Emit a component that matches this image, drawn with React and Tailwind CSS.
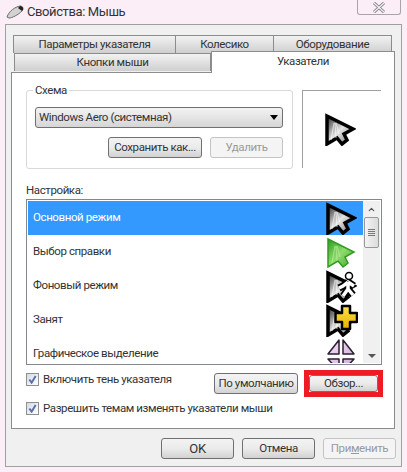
import { ChevronUp } from "lucide-react";

const font = { fontFamily: 'Roboto, "Noto Sans", sans-serif' };

const ARROW = "M2 3 L28 16 L19 21 L22 27 L17 31 L12 25 L2 31 Z";

function Cursor({ green = false }) {
  const id = green ? "arrowGreen" : "arrowGrey";
  return (
    <svg width="31" height="33" viewBox="0 0 31 33" className="shrink-0">
      <defs>
        <linearGradient id={id} x1="0" y1="0" x2="1" y2="1">
          {green ? (
            <>
              <stop offset="0" stopColor="#2c9a1e" />
              <stop offset="0.5" stopColor="#8fdc6c" />
              <stop offset="1" stopColor="#3ea62a" />
            </>
          ) : (
            <>
              <stop offset="0" stopColor="#2a2a2a" />
              <stop offset="0.5" stopColor="#e4e4e4" />
              <stop offset="1" stopColor="#707070" />
            </>
          )}
        </linearGradient>
      </defs>
      <path
        d={ARROW}
        fill={`url(#${id})`}
        stroke={green ? "#2f9c22" : "#000"}
        strokeWidth={green ? 1.5 : 3.5}
        strokeLinejoin="miter"
      />
      <path
        d="M6 27 L9 10 M11 25 L10 10 M14 21 L11 10"
        stroke={green ? "#c8f0b0" : "#fff"}
        strokeOpacity="0.55"
        strokeWidth="1.2"
        fill="none"
      />
    </svg>
  );
}

function Btn({ children, disabled, className = "" }) {
  return (
    <div
      className={`flex items-center justify-center whitespace-nowrap rounded-[3px] border text-[11.5px] ${
        disabled
          ? "border-[#c4c4c4] bg-[#f4f4f4] text-[#9a9a9a]"
          : "border-[#707070] bg-gradient-to-b from-[#f3f3f3] via-[#ebebeb] to-[#d2d2d2] text-[#333]"
      } ${className}`}
    >
      {children}
    </div>
  );
}

function Check({ children }) {
  return (
    <div className="flex items-center gap-[4px] whitespace-nowrap text-[11.5px] text-[#333]">
      <div className="flex h-[13px] w-[13px] items-center justify-center border border-[#8e8f8f] bg-gradient-to-br from-[#d5dbe3] to-white">
        <svg width="9" height="9" viewBox="0 0 10 10">
          <path d="M1.5 5 L4 8.5 L8.5 1" stroke="#5a70a8" strokeWidth="2.2" fill="none" />
        </svg>
      </div>
      {children}
    </div>
  );
}

const rows = ["Основной режим", "Выбор справки", "Фоновый режим", "Занят", "Графическое выделение"];

function RowIcon({ i }) {
  if (i === 0) return <Cursor />;
  if (i === 1) return <Cursor green />;
  if (i === 2)
    return (
      <div className="relative h-[33px] w-[31px]">
        <Cursor />
        <svg width="20" height="27" viewBox="0 0 20 27" className="absolute right-0 top-[1px]">
          <path d="M11 11 L6 15 L2 17 M11 11 L11 18 L6 25 M11 18 L16 24 M11 11 L17 15" stroke="#000" strokeWidth="7" fill="none" />
          <path d="M11 11 L6 15 L2 17 M11 11 L11 18 L6 25 M11 18 L16 24 M11 11 L17 15" stroke="#fff" strokeWidth="3.5" fill="none" />
          <circle cx="12" cy="5" r="3.5" fill="#fff" stroke="#000" strokeWidth="1.5" />
        </svg>
      </div>
    );
  if (i === 3)
    return (
      <div className="relative h-[33px] w-[31px]">
        <Cursor />
        <svg width="24" height="27" viewBox="0 0 24 27" className="absolute right-[-1px] top-0">
          <defs>
            <linearGradient id="plusFill" x1="0" y1="0" x2="0" y2="1">
              <stop offset="0" stopColor="#fbe04a" />
              <stop offset="1" stopColor="#e8b200" />
            </linearGradient>
          </defs>
          <path d="M8 2 H16 V9 H23 V18 H16 V25 H8 V18 H1.5 V9 H8 Z" fill="url(#plusFill)" stroke="#000" strokeWidth="2.5" strokeLinejoin="round" />
        </svg>
      </div>
    );
  return (
    <svg width="31" height="33" viewBox="0 0 31 33" className="shrink-0">
      <defs>
        <linearGradient id="selFill" x1="0" y1="0" x2="1" y2="1">
          <stop offset="0" stopColor="#f2e2f2" />
          <stop offset="1" stopColor="#cfa6d6" />
        </linearGradient>
      </defs>
      <path
        d="M13 2 L13 16 L2 16 Z M17 2 L28 16 L17 16 Z M2 21 L13 21 L13 33 Z M17 21 L28 21 L17 33 Z"
        fill="url(#selFill)"
        stroke="#2a2030"
        strokeWidth="1.5"
        strokeLinejoin="round"
      />
    </svg>
  );
}

export default function App() {
  return (
    <div style={font} className="h-[472px] w-[407px] overflow-hidden bg-[#fbeef7] tracking-[-0.4px]">
      {/* title bar */}
      <div className="flex h-[24px] items-center pl-[6px]">
        <svg width="19" height="14" viewBox="0 0 19 14">
          <path d="M1 12 C3 6 9 2 14 1 C17 1 18 4 16 6 C12 10 6 13 3 13 Z" fill="#d2d2d2" stroke="#6d6d6d" />
          <path d="M14 1 C17 1 18 4 16 6 L12 3 Z" fill="#222" />
        </svg>
        <span className="ml-[2px] text-[13px] text-[#333]">Свойства: Мышь</span>
        <div className="ml-auto mr-[6px] mb-[9px] flex h-[15px] w-[44px] items-center justify-center rounded-b-[3px] border border-t-0 border-[#a9a4a8]">
          <svg width="14" height="11" viewBox="0 0 14 11">
            <path d="M2 1 L12 10 M12 1 L2 10" stroke="#777" strokeWidth="3" />
            <path d="M2 1 L12 10 M12 1 L2 10" stroke="#f6f0f4" strokeWidth="1.4" />
          </svg>
        </div>
      </div>

      {/* window body */}
      <div className="mx-[5px] flex h-[443px] flex-col border border-[#a0a0a0] bg-[#f0f0f0] px-[5px] pt-[10px]">
        {/* tabs */}
        <div className="flex pl-[2px] text-[11.5px] text-[#333]">
          <div className="flex h-[18px] w-[163px] items-center justify-center border border-b-0 border-[#8c8c8c] bg-gradient-to-b from-[#f2f2f2] to-[#cfcfcf]">Параметры указателя</div>
          <div className="flex h-[18px] w-[98px] items-center justify-center border border-b-0 border-l-0 border-[#8c8c8c] bg-gradient-to-b from-[#f2f2f2] to-[#cfcfcf]">Колесико</div>
          <div className="flex h-[18px] w-[118px] items-center justify-center border border-b-0 border-l-0 border-[#8c8c8c] bg-gradient-to-b from-[#f2f2f2] to-[#cfcfcf]">Оборудование</div>
        </div>
        <div className="-mt-[2px] flex items-end pl-[3px] text-[11.5px] text-[#333]">
          <div className="mb-[1px] flex h-[18px] w-[197px] items-center justify-center border border-b-0 border-[#8c8c8c] bg-gradient-to-b from-[#f2f2f2] to-[#cfcfcf] pt-[1px]">Кнопки мыши</div>
          <div className="z-10 -mb-[1px] flex h-[22px] w-[184px] justify-center border border-b-0 border-[#8c8c8c] bg-white pt-[1px]">Указатели</div>
        </div>

        {/* tab panel */}
        <div className="flex h-[357px] w-[384px] flex-col border border-[#8c8c8c] bg-white pl-[14px] pr-[12px] text-[11.5px] text-[#333]">
          <div className="mt-[17px] flex">
            <div className="relative h-[79px] w-[267px] rounded-[3px] border border-[#d9d9d9] pl-[8px] pr-[9px]">
              <span className="absolute -top-[9px] left-[6px] bg-white px-[2px]">Схема</span>
              <div className="mt-[16px] flex h-[21px] items-center justify-between rounded-[3px] border border-[#707070] bg-gradient-to-b from-[#f3f3f3] to-[#d6d6d6] pl-[3px] pr-[4px]">
                Windows Aero (системная)
                <span className="h-0 w-0 border-x-[4px] border-t-[5px] border-x-transparent border-t-black" />
              </div>
              <div className="mt-[9px] flex justify-end gap-[8px]">
                <Btn className="h-[21px] w-[94px]">Сохранить как...</Btn>
                <Btn disabled className="h-[21px] w-[73px]">Удалить</Btn>
              </div>
            </div>
            <div className="ml-[9px] flex h-[78px] w-[79px] items-center justify-center border-l border-t border-[#a0a0a0] pr-[4px]">
              <Cursor />
            </div>
          </div>

          <div className="mt-[12px] h-[18px] leading-[18px]">Настройка:</div>

          <div className="flex h-[166px] w-[356px] border border-[#828790] p-[1px]">
            <div className="min-w-0 flex-1 overflow-hidden">
              {rows.map((r, i) => (
                <div key={r} className={`flex h-[34px] items-center justify-between pl-[5px] pr-[6px] ${i === 0 ? "bg-[#3399ff] text-white" : ""}`}>
                  {r}
                  <RowIcon i={i} />
                </div>
              ))}
            </div>
            <div className="flex w-[17px] flex-col items-center bg-[#f0f0f0]">
              <ChevronUp size={9} strokeWidth={3} className="mt-[4px] text-[#555]" />
              <div className="mt-[3px] flex h-[31px] w-[15px] flex-col items-center justify-center gap-[1px] rounded-[2px] border border-[#989898] bg-gradient-to-r from-[#f4f4f4] to-[#dcdcdc]">
                <span className="h-px w-[7px] bg-[#777]" />
                <span className="h-px w-[7px] bg-[#777]" />
                <span className="h-px w-[7px] bg-[#777]" />
                <span className="h-px w-[7px] bg-[#777]" />
              </div>
              <span className="mb-[5px] mt-auto h-0 w-0 border-x-[4px] border-t-[4px] border-x-transparent border-t-[#555]" />
            </div>
          </div>

          <div className="mt-[5px] flex items-start">
            <div className="mt-[1px]">
              <Check>Включить тень указателя</Check>
            </div>
            <Btn className="ml-auto mt-[3px] h-[21px] w-[84px]">По умолчанию</Btn>
            <div className="ml-[6px] mr-[-1px] border-[5px] border-[#ed1c24] bg-white">
              <Btn className="h-[17px] w-[69px]">Обзор...</Btn>
            </div>
          </div>
          <div className="mt-[3px]">
            <Check>Разрешить темам изменять указатели мыши</Check>
          </div>
        </div>

        {/* dialog buttons */}
        <div className="mt-[9px] flex justify-end gap-[8px]">
          <Btn className="h-[21px] w-[73px] text-[13px]">OK</Btn>
          <Btn className="h-[21px] w-[73px]">Отмена</Btn>
          <Btn disabled className="h-[21px] w-[73px]">
            <span>
              При<span className="underline">м</span>енить
            </span>
          </Btn>
        </div>
      </div>
    </div>
  );
}
